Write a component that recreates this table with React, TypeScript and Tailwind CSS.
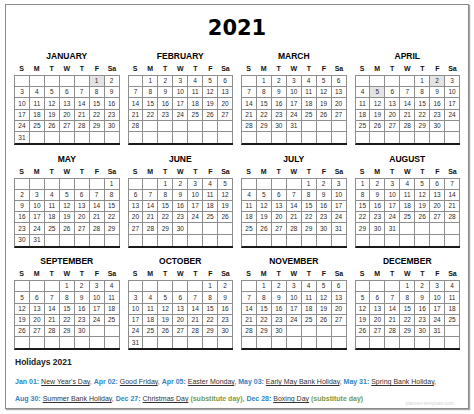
import React from 'react'

const months: [string, number, number][] = [
  ['JANUARY', 5, 31],
  ['FEBRUARY', 1, 28],
  ['MARCH', 1, 31],
  ['APRIL', 4, 30],
  ['MAY', 6, 31],
  ['JUNE', 2, 30],
  ['JULY', 4, 31],
  ['AUGUST', 0, 31],
  ['SEPTEMBER', 3, 30],
  ['OCTOBER', 5, 31],
  ['NOVEMBER', 1, 30],
  ['DECEMBER', 3, 31],
]

const shaded: Record<string, number[]> = { JANUARY: [1], APRIL: [2, 5] }
const weekdays = ['S', 'M', 'T', 'W', 'T', 'F', 'Sa']

const line1: [string, string, boolean][] = [
  ['Jan 01', "New Year's Day", false],
  ['Apr 02', 'Good Friday', false],
  ['Apr 05', 'Easter Monday', false],
  ['May 03', 'Early May Bank Holiday', false],
  ['May 31', 'Spring Bank Holiday', false],
]
const line2: [string, string, boolean][] = [
  ['Aug 30', 'Summer Bank Holiday', false],
  ['Dec 27', 'Christmas Day', true],
  ['Dec 28', 'Boxing Day', true],
]

function Month({ name, start, days }: { name: string; start: number; days: number }) {
  const cells = Array.from({ length: 42 }, (_, i) => {
    const d = i - start + 1
    return d >= 1 && d <= days ? d : null
  })
  const marks = shaded[name] ?? []
  return (
    <div>
      <div className="h-[12px] text-center text-[8.5px] font-bold leading-[12px] text-black">{name}</div>
      <div className="grid h-[13px] grid-cols-7 text-center text-[7px] font-bold leading-[13px] text-[#111]">
        {weekdays.map((w, i) => (
          <span key={i}>{w}</span>
        ))}
      </div>
      <div className="grid grid-cols-7 border-t border-l border-b-2 border-[#8e8e8e] border-b-[#1a1a1a]">
        {cells.map((d, i) => (
          <div
            key={i}
            className={`flex h-[11.2px] items-center justify-center border-r border-[#8e8e8e] text-[6.5px] text-[#2a2a2a] ${i < 35 ? 'border-b' : ''} ${d && marks.includes(d) ? 'bg-[#e4e4e4]' : ''}`}
          >
            {d}
          </div>
        ))}
      </div>
    </div>
  )
}

function HolidayLine({ items, last }: { items: [string, string, boolean][]; last: boolean }) {
  return (
    <p className="h-[17px] whitespace-nowrap text-[7px] leading-[17px] text-[#333]">
      {items.map(([date, label, sub], i) => (
        <span key={date}>
          <span className="font-bold text-[#2f86c4]">{date}:</span>{' '}
          <span className="underline">{label}</span>
          {sub && <span className="font-bold text-[#7a9a4a]"> (substitute day)</span>}
          {(i < items.length - 1 || !last) && ',  '}
        </span>
      ))}
    </p>
  )
}

export default function App() {
  return (
    <div className="h-[414px] w-[474px] bg-white pt-[4px] pl-[5px] font-['Liberation_Sans',Arial,sans-serif]">
      <div className="h-[405px] w-[464px] border border-[#8a8a8a] bg-white px-[8px] pt-[11px] shadow-[1px_1px_1px_rgba(0,0,0,0.35)]">
        <h1 className="h-[24px] text-center font-['DejaVu_Sans',sans-serif] text-[21px] font-black leading-[24px] text-black">
          2021
        </h1>
        <div className="mt-[10px] grid grid-cols-4 gap-x-[8px] gap-y-[7.5px]">
          {months.map(([name, start, days]) => (
            <Month key={name} name={name} start={start} days={days} />
          ))}
        </div>
        <h2 className="mt-[5px] h-[14px] pl-[1px] text-[8.5px] font-bold leading-[14px] text-[#222]">Holidays 2021</h2>
        <div className="mt-[4px] pl-[1px]">
          <HolidayLine items={line1} last={false} />
          <div className="flex h-[17px] items-end justify-between">
            <HolidayLine items={line2} last={true} />
            <span className="pr-[6px] text-[5px] leading-[8px] text-[#d4d4d4]">planner-template.com</span>
          </div>
        </div>
      </div>
    </div>
  )
}
